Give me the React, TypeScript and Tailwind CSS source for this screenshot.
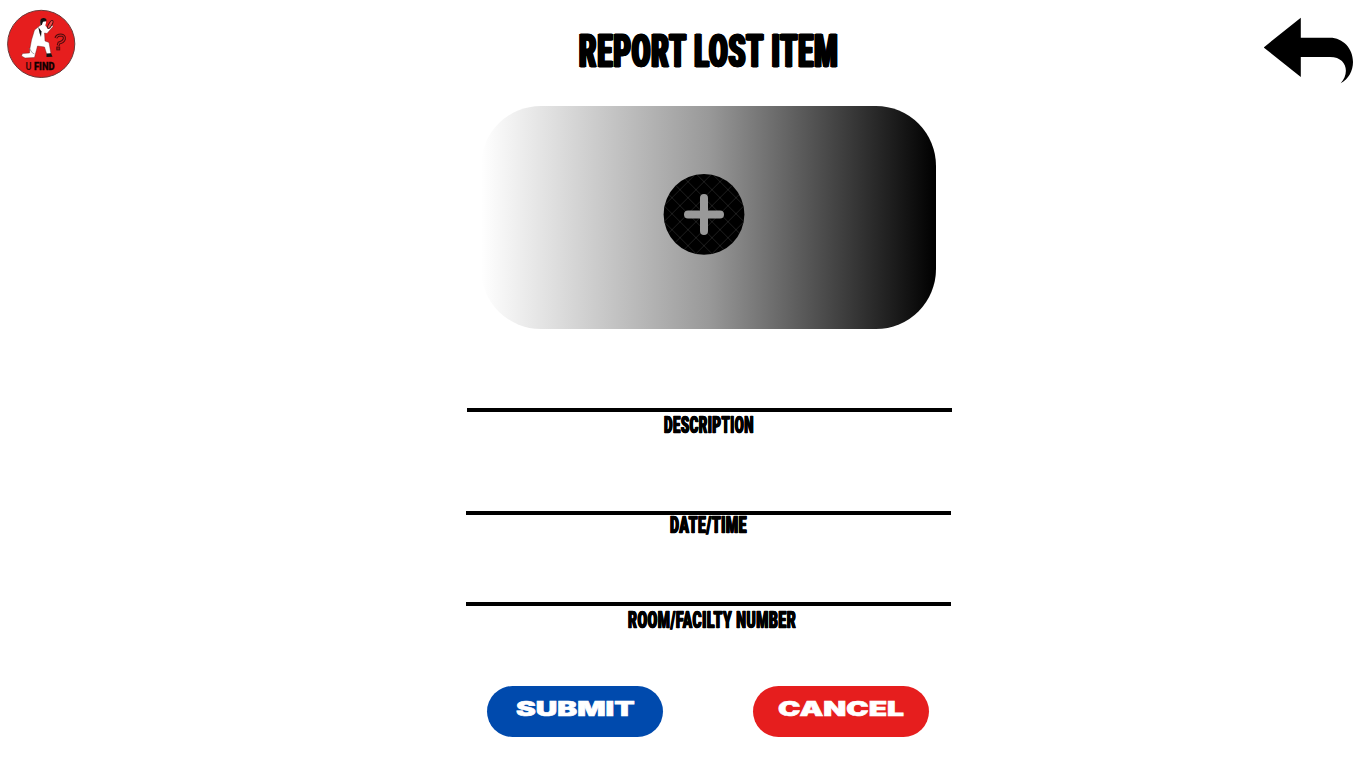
import { useLayoutEffect, useRef, useState } from "react";

type FitTextProps = { children: string; width: number; className?: string };

/* Stretches or condenses a single line of text so it is exactly `width` wide. */
function FitText({ children, width, className = "" }: FitTextProps) {
  const ref = useRef<HTMLSpanElement>(null);
  const [scale, setScale] = useState(1);
  useLayoutEffect(() => {
    if (ref.current) setScale(width / ref.current.offsetWidth);
  }, [width]);
  return (
    <span className="block text-left" style={{ width }}>
      <span
        ref={ref}
        className={`inline-block origin-left align-top whitespace-nowrap ${className}`}
        style={{ transform: `scaleX(${scale})` }}
      >
        {children}
      </span>
    </span>
  );
}

function Logo() {
  return (
    <svg viewBox="0 0 84 84" className="h-[84px] w-[84px] shrink-0" aria-label="U Find">
      <circle cx="41.2" cy="43.9" r="33.6" fill="#e61e1e" stroke="#6b3a3a" strokeWidth="1" />
      <path
        d="M40 25.5 L45 24.5 L47 27.5 L51.5 24 L53 26.5 L47 33.5 L44.5 33 L45 41 L49 42.5 L51 54 L47 55 L44.5 47 L37.5 46 L34.5 57.5 L25 58 L21.5 56 L22.5 53.5 L29.5 53 L30 48 L31.5 40 L34.5 30 Z"
        fill="#fff"
        stroke="#5a1515"
        strokeWidth=".4"
      />
      <path d="M40.5 24.5 Q39.5 19 44 19 Q46.5 20 46 23 L45 26 L41.5 26 Z" fill="#fff" />
      <path d="M40.5 25 Q39 17.5 44 18 Q47.2 18.5 46.3 21.2 L43 21.7 L41.8 25 Z" fill="#111" />
      <path d="M38.3 27 L41.5 31.5 L41 37 L39.5 33 Z" fill="#111" />
      <path d="M46.5 53.5 L51 53.3 L52.5 56.8 L46.5 57 Z" fill="#111" />
      <path d="M29 48 L32.5 53 L34.5 54" fill="none" stroke="#777" strokeWidth=".6" />
      <ellipse cx="50.3" cy="24.5" rx="1.6" ry="4.6" transform="rotate(30 50.3 24.5)" fill="#f04a4a" stroke="#3a1010" strokeWidth=".9" />
      <path d="M55.8 38 Q57 35 60.8 35 Q65 35.3 64.3 39 Q63.5 42 59 43 L58.2 45.5" fill="none" stroke="#4a0c0c" strokeWidth="3.1" />
      <path d="M56.2 37.8 Q57.2 35 60.8 35 Q65 35.3 64.3 39 Q63.5 42 59 43 L58.3 45.2" fill="none" stroke="#d81e1e" strokeWidth="1.1" />
      <rect x="56.8" y="47" width="2.9" height="2.9" fill="#a51515" stroke="#4a0c0c" strokeWidth=".9" />
      <text x="25.6" y="69.6" fontFamily="Roboto, sans-serif" fontSize="10.4" fontWeight="600" textLength="6" lengthAdjust="spacingAndGlyphs" fill="#300707">U</text>
      <text x="34" y="69.6" fontFamily="Roboto, sans-serif" fontSize="10.4" fontWeight="900" textLength="20.6" lengthAdjust="spacingAndGlyphs" fill="#100" stroke="#100" strokeWidth=".3">FIND</text>
    </svg>
  );
}

function BackArrow() {
  return (
    <svg viewBox="1264 17 90 68" className="h-[68px] w-[90px]" aria-hidden="true">
      <path d="M1263.7 47.4 L1300.8 17.8 V37.7 H1330 C1343 37.7 1353 48.5 1353 62 C1353 71 1348.5 79 1340.7 83.2 C1350 73 1347 57 1330 57 H1300.8 V77 Z" />
    </svg>
  );
}

function AddIcon() {
  return (
    <svg viewBox="663 173 82 82" className="h-[82px] w-[82px]" aria-hidden="true">
      <defs>
        <pattern id="lattice" x="704" y="181.7" width="16" height="16" patternUnits="userSpaceOnUse">
          <path d="M0 0 L16 16 M16 0 L0 16" stroke="#333" strokeWidth=".6" />
        </pattern>
      </defs>
      <circle cx="704" cy="214.4" r="40.4" fill="#000" />
      <circle cx="704" cy="214.4" r="40.2" fill="url(#lattice)" />
      <path d="M704 198 V231 M688 214.4 H720" stroke="#999" strokeWidth="8" strokeLinecap="round" />
    </svg>
  );
}

function Field({ label, width, className, gap }: { label: string; width: number; className: string; gap: string }) {
  return (
    <div className={`flex w-[485px] flex-col items-center ${className}`}>
      <div className="h-1 w-full bg-black" />
      <div className={gap}>
        <FitText
          width={width}
          className="font-['Roboto'] text-[24px] leading-6 font-black tracking-[1px] [-webkit-text-stroke:0.6px_black] [text-shadow:1px_0_0_black,-1px_0_0_black]"
        >
          {label}
        </FitText>
      </div>
    </div>
  );
}

function ActionButton({ label, width, className }: { label: string; width: number; className: string }) {
  return (
    <button type="button" className={`flex h-[51px] w-[176.5px] items-start justify-center rounded-[25.5px] pt-[11px] pl-px text-white ${className}`}>
      <FitText width={width} className="font-['Inter'] text-[19.5px] leading-6 font-black [-webkit-text-stroke:0.6px_white]">
        {label}
      </FitText>
    </button>
  );
}

export default function App() {
  return (
    <div className="flex h-[768px] w-[1366px] flex-col overflow-hidden bg-white text-black">
      <header className="flex h-[106px] items-start">
        <Logo />
        <h1 className="mt-[27px] ml-[494.6px]">
          <FitText
            width={260}
            className="font-['Roboto'] text-[46.5px] leading-[48px] font-black tracking-[2px] [word-spacing:0.5px] [-webkit-text-stroke:0.8px_black] [text-shadow:2.3px_0_0_black,-2.3px_0_0_black,1.2px_0_0_black,-1.2px_0_0_black]"
          >
            REPORT LOST ITEM
          </FitText>
        </h1>
        <div className="mt-[17px] mr-3 ml-auto">
          <BackArrow />
        </div>
      </header>
      <main className="ml-[466px] flex w-[486px] flex-col items-start">
        <div className="ml-[15px] flex h-[222.7px] w-[455.3px] justify-center rounded-[60px] bg-[linear-gradient(to_right,#fff_0%,#999_50%,#000_100%)] pt-[67px] pr-[9.3px]">
          <AddIcon />
        </div>
        <Field label="DESCRIPTION" width={90} className="mt-[79.3px] ml-[0.6px] h-[103px]" gap="mt-[1px] mr-[0.6px]" />
        <Field label="DATE/TIME" width={77} className="-ml-[0.4px] h-[91px]" gap="-mt-[2px]" />
        <Field label="ROOM/FACILTY NUMBER" width={168.5} className="-ml-[0.4px] h-[84.5px]" gap="mt-[2px] ml-[8.6px]" />
        <div className="ml-[20.7px] flex gap-[89.5px]">
          <ActionButton label="SUBMIT" width={119} className="bg-[#004aad]" />
          <ActionButton label="CANCEL" width={126} className="bg-[#e61e1e]" />
        </div>
      </main>
    </div>
  );
}
